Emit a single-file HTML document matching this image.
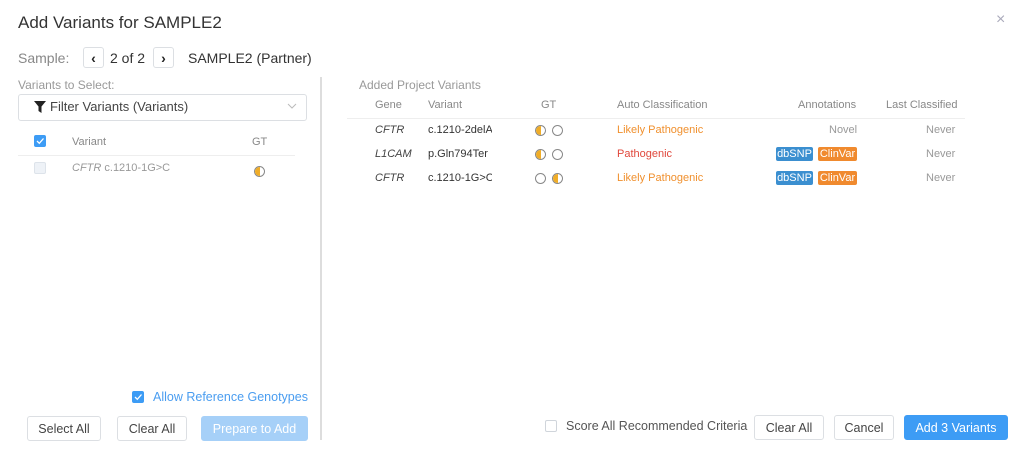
<!DOCTYPE html>
<html><head><meta charset="utf-8"><style>
*{box-sizing:border-box;margin:0;padding:0}
body{width:1024px;height:463px;background:#fff;font-family:"Liberation Sans",sans-serif;position:relative;overflow:hidden;color:#333}
.a{position:absolute;white-space:nowrap}
.btn{position:absolute;border:1px solid #dcdfe3;border-radius:3px;background:#fff;font-size:12.5px;color:#444;display:flex;align-items:center;justify-content:center;height:25px}
.cb{position:absolute;width:12px;height:12px;border:1px solid #d0d5db;border-radius:2px;background:#fff}
.cbon{background:#3d9cf5;border-color:#3d9cf5}
.h{font-size:11px;color:#888}
.gt{position:absolute;width:11px;height:11px;border:1px solid #888;border-radius:50%;overflow:hidden}
.gt.f::before{content:"";position:absolute;left:0;top:0;width:50%;height:100%;background:#f0ad28}
.r{font-size:11px}
.badge{position:absolute;height:14px;font-size:11px;line-height:14px;color:#fff;border-radius:2px;text-align:center}
</style></head><body>
<div class="a" style="left:18px;top:13px;font-size:17px;color:#333">Add Variants for SAMPLE2</div>
<div class="a" style="left:996px;top:11px;font-size:16px;color:#aab">×</div>
<div class="a" style="left:18px;top:50px;font-size:14px;color:#888">Sample:</div>
<div class="btn" style="left:83px;top:47px;width:21px;height:21px;font-weight:bold;font-size:14px;color:#222">&#8249;</div>
<div class="a" style="left:110px;top:50px;font-size:14px;color:#333">2 of 2</div>
<div class="btn" style="left:153px;top:47px;width:21px;height:21px;font-weight:bold;font-size:14px;color:#222">&#8250;</div>
<div class="a" style="left:188px;top:50px;font-size:14px;color:#333">SAMPLE2 (Partner)</div>
<div class="a" style="left:320px;top:77px;width:2px;height:363px;background:#ddd"></div>

<div class="a" style="left:18px;top:78px;font-size:12px;color:#999">Variants to Select:</div>
<div class="a" style="left:18px;top:94px;width:289px;height:27px;border:1px solid #dcdfe3;border-radius:3px"></div>
<svg class="a" style="left:34px;top:101px" width="12" height="12" viewBox="0 0 12 12"><path d="M0 0H12L7.5 5.5V12L4.5 10V5.5Z" fill="#222"/></svg>
<div class="a" style="left:50px;top:99px;font-size:13px;color:#444">Filter Variants (Variants)</div>
<svg class="a" style="left:287px;top:103px" width="10" height="7"><path d="M1 1L5 5L9 1" stroke="#bbb" fill="none"/></svg>
<div class="cb cbon" style="left:34px;top:135px"><svg width="10" height="10" style="position:absolute;left:0;top:0"><path d="M2 5L4.3 7.3L8.5 2.5" stroke="#fff" stroke-width="1.3" fill="none"/></svg></div>
<div class="a h" style="left:72px;top:136px">Variant</div>
<div class="a h" style="left:252px;top:136px">GT</div>
<div class="a" style="left:18px;top:155px;width:277px;height:1px;background:#eee"></div>
<div class="cb" style="left:34px;top:162px;background:#eef2f7;border-color:#dde3ea"></div>
<div class="a" style="left:72px;top:162px;font-size:11px;color:#999"><i>CFTR</i> c.1210-1G&gt;C</div>
<div class="gt f" style="left:254px;top:166px"></div>

<div class="cb cbon" style="left:132px;top:391px"><svg width="10" height="10" style="position:absolute;left:0;top:0"><path d="M2 5L4.3 7.3L8.5 2.5" stroke="#fff" stroke-width="1.3" fill="none"/></svg></div>
<div class="a" style="left:153px;top:390px;font-size:12.5px;color:#4a9df0">Allow Reference Genotypes</div>
<div class="btn" style="left:27px;top:416px;width:74px">Select All</div>
<div class="btn" style="left:117px;top:416px;width:70px">Clear All</div>
<div class="btn" style="left:201px;top:416px;width:107px;background:#a6d0f8;border-color:#a6d0f8;color:#fff">Prepare to Add</div>

<div class="a" style="left:359px;top:78px;font-size:12px;color:#999">Added Project Variants</div>
<div class="a h" style="left:375px;top:99px">Gene</div>
<div class="a h" style="left:428px;top:99px">Variant</div>
<div class="a h" style="left:541px;top:99px">GT</div>
<div class="a h" style="left:617px;top:99px">Auto Classification</div>
<div class="a h" style="left:798px;top:99px">Annotations</div>
<div class="a h" style="left:886px;top:99px">Last Classified</div>
<div class="a" style="left:347px;top:118px;width:618px;height:1px;background:#eee"></div>

<div class="a r" style="left:375px;top:124px;color:#444"><i>CFTR</i></div>
<div class="a r" style="left:428px;top:124px;color:#333;width:64px;overflow:hidden">c.1210-2delA</div>
<div class="gt f" style="left:535px;top:125px"></div><div class="gt" style="left:552px;top:125px"></div>
<div class="a r" style="left:617px;top:124px;color:#f0902e">Likely Pathogenic</div>
<div class="a r" style="left:829px;top:124px;color:#999">Novel</div>
<div class="a r" style="left:926px;top:124px;color:#999">Never</div>

<div class="a r" style="left:375px;top:148px;color:#444"><i>L1CAM</i></div>
<div class="a r" style="left:428px;top:148px;color:#333">p.Gln794Ter</div>
<div class="gt f" style="left:535px;top:149px"></div><div class="gt" style="left:552px;top:149px"></div>
<div class="a r" style="left:617px;top:148px;color:#e0483c">Pathogenic</div>
<div class="badge" style="left:776px;top:147px;width:37px;background:#3b8fd0">dbSNP</div>
<div class="badge" style="left:818px;top:147px;width:39px;background:#f08a2e">ClinVar</div>
<div class="a r" style="left:926px;top:148px;color:#999">Never</div>

<div class="a r" style="left:375px;top:172px;color:#444"><i>CFTR</i></div>
<div class="a r" style="left:428px;top:172px;color:#333;width:64px;overflow:hidden">c.1210-1G&gt;C</div>
<div class="gt" style="left:535px;top:173px"></div><div class="gt f" style="left:552px;top:173px"></div>
<div class="a r" style="left:617px;top:172px;color:#f0902e">Likely Pathogenic</div>
<div class="badge" style="left:776px;top:171px;width:37px;background:#3b8fd0">dbSNP</div>
<div class="badge" style="left:818px;top:171px;width:39px;background:#f08a2e">ClinVar</div>
<div class="a r" style="left:926px;top:172px;color:#999">Never</div>

<div class="cb" style="left:545px;top:420px"></div>
<div class="a" style="left:566px;top:419px;font-size:12.5px;color:#555">Score All Recommended Criteria</div>
<div class="btn" style="left:754px;top:415px;width:70px">Clear All</div>
<div class="btn" style="left:834px;top:415px;width:60px">Cancel</div>
<div class="btn" style="left:904px;top:415px;width:104px;background:#3d9cf5;border-color:#3d9cf5;color:#fff">Add 3 Variants</div>
</body></html>
